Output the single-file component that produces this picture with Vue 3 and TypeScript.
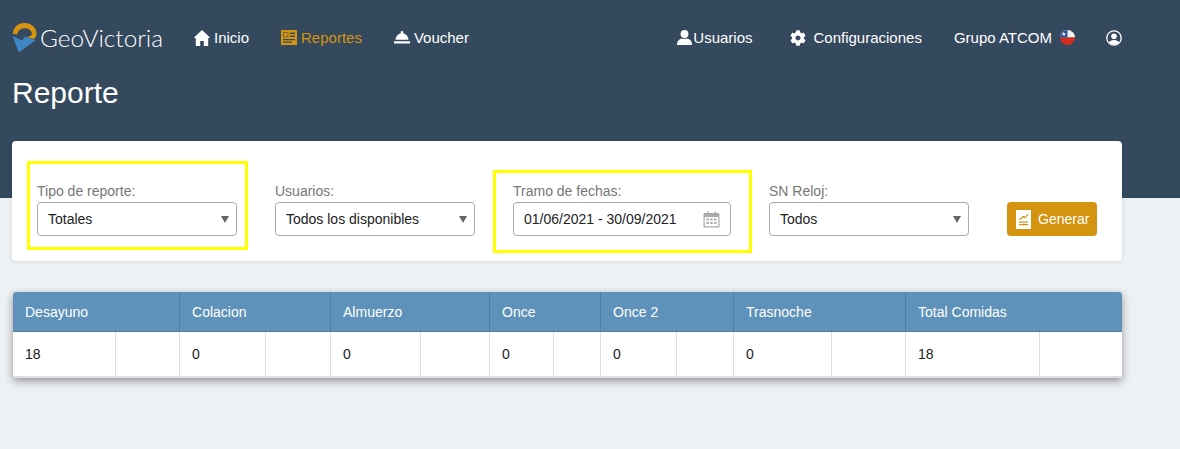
<script setup lang="ts">
const heads: string[] = ['Desayuno', 'Colacion', 'Almuerzo', 'Once', 'Once 2', 'Trasnoche', 'Total Comidas']
const values: string[] = ['18', '0', '0', '0', '0', '0', '18']
const cogPath = 'M487.4 315.7l-42.6-24.6c4.3-23.2 4.3-47 0-70.2l42.6-24.6c4.9-2.8 7.1-8.6 5.5-14-11.1-35.6-30-67.8-54.7-94.6-3.8-4.1-10-5.1-14.8-2.3L380.8 110c-17.9-15.4-38.5-27.3-60.8-35.1V25.8c0-5.6-3.9-10.5-9.4-11.7-36.7-8.2-74.3-7.8-109.2 0-5.5 1.2-9.4 6.1-9.4 11.7V75c-22.2 7.9-42.8 19.8-60.8 35.1L88.7 85.5c-4.9-2.8-11-1.9-14.8 2.3-24.7 26.7-43.6 58.9-54.7 94.6-1.7 5.4.6 11.2 5.5 14L67.3 221c-4.3 23.2-4.3 47 0 70.2l-42.6 24.6c-4.9 2.8-7.1 8.6-5.5 14 11.1 35.6 30 67.8 54.7 94.6 3.8 4.1 10 5.1 14.8 2.3l42.6-24.6c17.9 15.4 38.5 27.3 60.8 35.1v49.2c0 5.6 3.9 10.5 9.4 11.7 36.7 8.2 74.3 7.8 109.2 0 5.5-1.2 9.4-6.1 9.4-11.7v-49.2c22.2-7.9 42.8-19.8 60.8-35.1l42.6 24.6c4.9 2.8 11 1.9 14.8-2.3 24.7-26.7 43.6-58.9 54.7-94.6 1.5-5.5-.7-11.3-5.6-14.1zM256 336c-44.1 0-80-35.9-80-80s35.9-80 80-80 80 35.9 80 80-35.9 80-80 80z'
</script>

<template>
  <div class="page">
    <header class="nav">
      <a class="brand">
        <svg class="logo" viewBox="0 0 26 31" width="26" height="31">
          <path d="M1 12C1 5.500 6 1 12.500 1S24.500 5.500 24.500 11.500c0 2.600-1 4.500-3 5.600l-6.500-1.800 4-1.800c.9-.5 1.100-1.300.9-2.300C19.200 8.300 16.300 6.300 12.500 6.300 8.800 6.300 5.900 8.500 5.300 12.200z" fill="#d4940f" />
          <path d="M.5 13.800 10.200 18.500 13 14.600 23.500 18.200 6.800 30.500z" fill="#3f86c4" />
        </svg>
        <span class="brand-text">GeoVictoria</span>
      </a>
      <a class="item home">
        <svg viewBox="0 0 16 16" width="16" height="16"><path d="M8 0 16 7.600 14.200 8.200V16H9.800V11H6.200V16H1.800V8.200L0 7.600z" fill="#fff" /></svg>
        Inicio
      </a>
      <a class="item active reports">
        <svg viewBox="0 0 16 15" width="16" height="15"><path fill-rule="evenodd" d="M0 0H16V15H0zM9 2.500V4H14V2.500zM9 5.500V7H14V5.500zM2 9V10.300H14V9zM2 11.500V12.800H11V11.500z" fill="#d4940f" /><path d="M2.500 2.500H7V7H2.500z" fill="none" stroke="#34495e" stroke-width=".6" /></svg>
        Reportes
      </a>
      <a class="item voucher">
        <svg viewBox="0 0 16 13" width="16" height="13"><path d="M8 0a1.300 1.300 0 0 1 1 2.200C12 2.800 14.300 5.300 14.600 8.800H1.400C1.700 5.300 4 2.800 7 2.200A1.300 1.300 0 0 1 8 0zM0 10.200H16V12.500H0z" fill="#fff" /></svg>
        Voucher
      </a>
      <span class="spacer"></span>
      <a class="item users">
        <svg viewBox="0 0 16 16" width="15" height="15"><circle cx="8" cy="4.200" r="4.200" fill="#fff" /><path d="M0 16C0 12 2.500 9.400 5 9.400H11C13.500 9.400 16 12 16 16z" fill="#fff" /></svg>
        <span>Usuarios</span>
      </a>
      <a class="item config">
        <svg viewBox="0 0 512 512" width="16" height="16"><path :d="cogPath" fill="#fff" /></svg>
        Configuraciones
      </a>
      <a class="item group">
        Grupo ATCOM
        <svg viewBox="0 0 15 15" width="15" height="15" class="flag">
          <defs><clipPath id="flagClip"><circle cx="7.500" cy="7.500" r="7.500" /></clipPath></defs>
          <g clip-path="url(#flagClip)">
            <rect width="15" height="7.500" fill="#f0f0f0" />
            <rect y="7.500" width="15" height="7.500" fill="#d52b1e" />
            <rect width="7.500" height="7.500" fill="#2a4f96" />
            <path d="M3.800 1.800l.6 1.500 1.500.1-1.200 1 .4 1.500-1.300-.8-1.300.8.400-1.500-1.200-1 1.500-.1z" fill="#fff" />
          </g>
        </svg>
      </a>
      <a class="item account">
        <svg viewBox="0 0 16 16" width="16" height="16">
          <defs><clipPath id="acc"><circle cx="8" cy="8" r="6.800" /></clipPath></defs>
          <circle cx="8" cy="8" r="7.200" fill="none" stroke="#fff" stroke-width="1.300" />
          <g clip-path="url(#acc)"><circle cx="8" cy="6.300" r="2.800" fill="#fff" /><ellipse cx="8" cy="14" rx="5.500" ry="4" fill="#fff" /></g>
        </svg>
      </a>
    </header>

    <h1 class="title">Reporte</h1>

    <section class="card">
      <div class="field w200 marked first">
        <label>Tipo de reporte:</label>
        <div class="control">Totales<i class="caret"></i></div>
      </div>
      <div class="field w200">
        <label>Usuarios:</label>
        <div class="control">Todos los disponibles<i class="caret"></i></div>
      </div>
      <div class="field w218 marked second">
        <label>Tramo de fechas:</label>
        <div class="control">
          01/06/2021 - 30/09/2021
          <svg class="cal" viewBox="0 0 17 17" width="17" height="17">
            <path fill-rule="evenodd" d="M1.500 2H4V.5H5.500V2H11.500V.5H13V2H15.500A1 1 0 0 1 16.500 3V15.500A1 1 0 0 1 15.500 16.500H1.500A1 1 0 0 1 .5 15.500V3A1 1 0 0 1 1.500 2zM1.700 6V15.300H15.300V6z" fill="#a9a9a9" />
            <path d="M3.500 7.500h2.400v2h-2.400zM7.300 7.500h2.400v2h-2.400zM11.100 7.500h2.400v2h-2.400zM3.500 11h2.400v2h-2.400zM7.300 11h2.400v2h-2.400zM11.100 11h2.400v2h-2.400z" fill="#a9a9a9" />
          </svg>
        </div>
      </div>
      <div class="field w200">
        <label>SN Reloj:</label>
        <div class="control">Todos<i class="caret"></i></div>
      </div>
      <button class="generate" type="button">
        <svg viewBox="0 0 15 19" width="15" height="19">
          <path fill-rule="evenodd" d="M0 0H15V19H0zM3 9.500 3.800 10.300 7 7.500 9 8.500 12.500 4.500 11.800 3.800 9 6.800 7 5.800zM3 11.500V12.800H12V11.500zM3 14V15.300H12V14z" fill="#fff" />
        </svg>
        Generar
      </button>
    </section>

    <table class="grid">
      <colgroup>
        <col v-for="n in 14" :key="n" />
      </colgroup>
      <thead>
        <tr>
          <th v-for="h in heads" :key="h" colspan="2">{{ h }}</th>
        </tr>
      </thead>
      <tbody>
        <tr>
          <template v-for="(v, i) in values" :key="i">
            <td>{{ v }}</td>
            <td></td>
          </template>
        </tr>
      </tbody>
    </table>
  </div>
</template>

<style>
html, body { margin: 0; background: #eef1f4; }
</style>

<style scoped>
.page {
  width: 1180px;
  height: 449px;
  overflow: hidden;
  background: linear-gradient(#34495e 198px, #eef1f4 198px);
  font-family: "Liberation Sans", Arial, sans-serif;
  font-size: 14px;
  color: #222;
}
.nav {
  display: flex;
  align-items: center;
  height: 75px;
  padding-left: 12px;
}
.brand { display: flex; align-items: center; width: 182px; }
.logo { flex: none; }
.brand-text {
  font-family: Lato, sans-serif;
  font-weight: 300;
  font-size: 24.4px;
  color: #fff;
  margin-left: 2px;
}
.item {
  display: flex;
  align-items: center;
  color: #fff;
  font-size: 15px;
  white-space: nowrap;
}
.item svg { flex: none; }
.active { color: #d4940f; }
.home svg, .reports svg, .voucher svg { margin-right: 4px; }
.home { margin-right: 32px; }
.reports { margin-right: 32px; }
.users svg { margin-right: 1px; }
.users { margin-right: 37px; }
.config svg { margin-right: 8px; }
.config { margin-right: 32px; }
.flag { margin-left: 8px; }
.group { margin-right: 31px; }
.account { margin-right: 58px; }
.spacer { flex: 1; }

.title {
  margin: 0 0 0 12px;
  height: 66px;
  font-size: 30px;
  font-weight: 400;
  line-height: 36px;
  color: #fff;
}
.card {
  display: flex;
  align-items: flex-end;
  box-sizing: border-box;
  width: 1110px;
  height: 120px;
  margin-left: 12px;
  padding: 0 25px 25px;
  background: #fff;
  border-radius: 4px;
  box-shadow: 0 1px 4px rgba(0, 0, 0, .1);
}
.field { position: relative; margin-right: 38px; }
.w200 { width: 200px; }
.w218 { width: 218px; }
.field label {
  display: block;
  height: 19px;
  line-height: 16px;
  color: #777;
  font-size: 14px;
}
.control {
  position: relative;
  display: flex;
  align-items: center;
  justify-content: space-between;
  box-sizing: border-box;
  height: 34px;
  padding: 0 10px;
  border: 1px solid #aaa;
  border-radius: 4px;
  color: #222;
  font-size: 14px;
}
.caret {
  border-left: 4px solid transparent;
  border-right: 4px solid transparent;
  border-top: 7px solid #666;
  margin-right: -3px;
}
.marked::after {
  content: "";
  position: absolute;
  pointer-events: none;
  border: 3px solid #ff0;
}
.first::after { inset: -22px -11px -14px -10px; }
.second::after { inset: -13px -21px -17px -20px; }
.generate {
  display: flex;
  align-items: center;
  gap: 7px;
  box-sizing: border-box;
  width: 90px;
  height: 34px;
  padding: 0 0 0 9px;
  border: 0;
  border-radius: 4px;
  background: #d4940f;
  color: #fff;
  font: 14px "Liberation Sans", Arial, sans-serif;
}
.grid {
  table-layout: fixed;
  width: 1109px;
  margin: 31px 0 0 13px;
  border-collapse: separate;
  border-spacing: 0;
  background: #fff;
  box-shadow: 0 3px 8px rgba(0, 0, 0, .4);
  border-radius: 3px 3px 0 0;
}
col:nth-child(1) { width: 103px; }
col:nth-child(2) { width: 64px; }
col:nth-child(3) { width: 86px; }
col:nth-child(4) { width: 65px; }
col:nth-child(5) { width: 90px; }
col:nth-child(6) { width: 69px; }
col:nth-child(7) { width: 64px; }
col:nth-child(8) { width: 47px; }
col:nth-child(9) { width: 76px; }
col:nth-child(10) { width: 57px; }
col:nth-child(11) { width: 98px; }
col:nth-child(12) { width: 74px; }
col:nth-child(13) { width: 134px; }
col:nth-child(14) { width: 82px; }
th {
  box-sizing: border-box;
  height: 40px;
  padding: 0 12px;
  background: #5e92ba;
  border-right: 1px solid #4f7fa5;
  border-bottom: 1px solid #4f7fa5;
  color: #fff;
  font-size: 14px;
  font-weight: 400;
  text-align: left;
}
th:last-child { border-right: 0; border-top-right-radius: 3px; }
th:first-child { border-top-left-radius: 3px; }
td {
  box-sizing: border-box;
  height: 46px;
  padding: 0 12px;
  border-right: 1px solid #ddd;
  border-bottom: 2px solid #ddd;
  font-size: 14px;
  color: #222;
}
td:last-child { border-right: 0; }
</style>
